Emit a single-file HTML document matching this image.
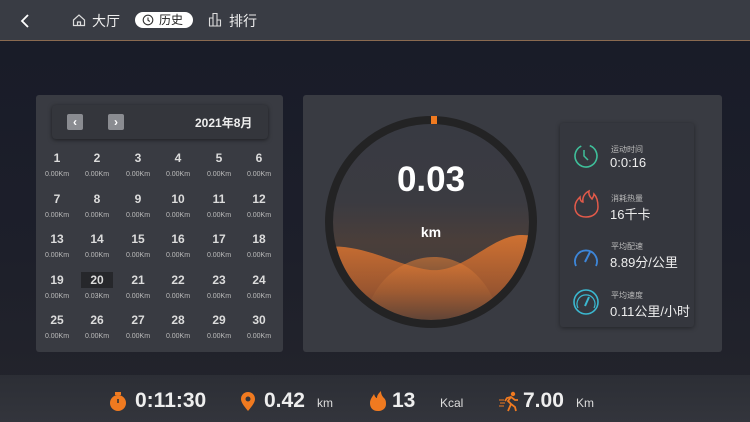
<!DOCTYPE html>
<html><head><meta charset="utf-8"><style>
*{margin:0;padding:0;box-sizing:border-box}
body{width:750px;height:422px;overflow:hidden;background:linear-gradient(180deg,#181b28 0%,#1d1f2a 60%,#24252c 100%);font-family:"Liberation Sans","Noto Sans CJK SC",sans-serif;color:#e6e6e6;position:relative}
.top{position:absolute;left:0;top:0;width:750px;height:41px;background:#393c44;border-bottom:1px solid #8a6a50}
.abs{position:absolute}
.panel{position:absolute;background:#393b42;border-radius:3px}
.hdr{position:absolute;left:52px;top:105px;width:216px;height:34px;background:#34363c;border-radius:4px;box-shadow:0 1px 4px rgba(0,0,0,.5)}
.btn{position:absolute;top:9px;width:16px;height:16px;background:#8a8c91;border-radius:2px;color:#fff;font-size:12px;line-height:16px;text-align:center;font-weight:bold}
.cell{position:absolute;width:40px;text-align:center}
.cell b{display:block;font-size:12px;color:#dcdcdc;height:16px;line-height:16px}
.cell i{display:block;font-style:normal;font-size:7px;color:#bbb;margin-top:5px}
.bot{position:absolute;left:0;top:375px;width:750px;height:47px;background:linear-gradient(#2c2e35,#33353c)}
.big{position:absolute;top:389px;font-size:21px;font-weight:bold;color:#eee}
.unit{position:absolute;top:396px;font-size:12px;color:#ddd}
.lab{position:absolute;left:611px;font-size:8px;color:#bbb}
.val{position:absolute;left:610px;font-size:13px;color:#eee}
</style></head><body>
<div class="top"></div>
<svg class="abs" style="left:18px;top:13px" width="14" height="16"><path d="M10 2 L4 8 L10 14" stroke="#fff" stroke-width="1.8" fill="none"/></svg>
<svg class="abs" style="left:72px;top:13px" width="14" height="14"><path d="M1.5 7 L7 2 L12.5 7 V12.5 H1.5 Z M5.5 12.5 V9 H8.5 V12.5" stroke="#ddd" stroke-width="1.2" fill="none"/></svg>
<div class="abs" style="left:92px;top:11px;font-size:14px;color:#eee">大厅</div>
<div class="abs" style="left:135px;top:12px;width:58px;height:16px;background:#fff;border-radius:8px"></div>
<svg class="abs" style="left:142px;top:14px" width="12" height="12"><circle cx="6" cy="6" r="4.8" stroke="#333" stroke-width="1.1" fill="none"/><path d="M6 3.5V6.2L7.8 7.5" stroke="#333" stroke-width="1.1" fill="none"/></svg>
<div class="abs" style="left:159px;top:12px;font-size:12px;color:#222;line-height:16px">历史</div>
<svg class="abs" style="left:208px;top:12px" width="14" height="15"><path d="M1.5 14V6H5V14 M5 14V1.5H9V14 M9 14V8H12.5V14 H1" stroke="#ddd" stroke-width="1.1" fill="none"/></svg>
<div class="abs" style="left:229px;top:11px;font-size:14px;color:#eee">排行</div>

<div class="panel" style="left:36px;top:95px;width:247px;height:257px"></div>
<div class="hdr"><div class="btn" style="left:15px">‹</div><div class="btn" style="left:56px">›</div>
<div class="abs" style="left:143px;top:9px;font-size:12px;font-weight:bold;color:#eee">2021年8月</div></div>
<div id="cal"></div>

<div class="panel" style="left:303px;top:95px;width:419px;height:257px"></div>
<svg class="abs" style="left:324px;top:115px" width="214" height="214">
<defs><clipPath id="c"><circle cx="107" cy="107" r="98"/></clipPath>
<linearGradient id="g1" x1="0" y1="0" x2="0" y2="1"><stop offset="0" stop-color="#e67a30"/><stop offset=".6" stop-color="#a85a2e"/><stop offset="1" stop-color="#4a3c38"/></linearGradient>
<linearGradient id="g2" x1="0" y1="0" x2="0" y2="1"><stop offset="0" stop-color="#f08436"/><stop offset="1" stop-color="#5a4035" stop-opacity=".6"/></linearGradient>
<linearGradient id="bg" x1="0" y1="0" x2="0" y2="1"><stop offset="0" stop-color="#383a42"/><stop offset=".4" stop-color="#3b3b41"/><stop offset=".6" stop-color="#4a3e3a"/><stop offset="1" stop-color="#3a3a3e"/></linearGradient></defs>
<circle cx="107" cy="107" r="98" fill="url(#bg)"/>
<g clip-path="url(#c)">
<path d="M0 132 C40 128 70 150 106 155 C140 158 165 122 196 120 C205 120 210 121 214 122 V214 H0Z" fill="url(#g1)" opacity=".85"/>
<path d="M39 214 C45 165 80 142 110 142 C140 142 170 165 178 214Z" fill="url(#g2)" opacity=".55"/>
</g>
<circle cx="107" cy="107" r="102" stroke="#232324" stroke-width="8" fill="none"/>
<rect x="107" y="1" width="6" height="8" fill="#f07a20"/>
</svg>
<div class="abs" style="left:331px;top:160px;width:200px;text-align:center;font-size:35px;font-weight:bold;color:#fff">0.03</div>
<div class="abs" style="left:331px;top:224px;width:200px;text-align:center;font-size:14px;font-weight:bold;color:#fff">km</div>

<div class="panel" style="left:560px;top:123px;width:134px;height:204px;background:#35373e;box-shadow:0 1px 5px rgba(0,0,0,.4)"></div>
<svg class="abs" style="left:572px;top:142px" width="30" height="180">
<circle cx="14" cy="14" r="11" stroke="#3fbf9a" stroke-width="1.6" fill="none" stroke-dasharray="60 9" transform="rotate(-70 14 14)"/><path d="M12 8V14L16 18" stroke="#3fbf9a" stroke-width="1.5" fill="none"/>
<path d="M14 75 C6 75 3 70 3 65 C3 60 6 57 8 55 C8 59 10 60 11 60 C10 55 13 51 17 49 C16 53 19 56 20 57 C21 55 22 54 22 52 C25 55 26 60 26 65 C26 71 21 75 14 75Z" stroke="#e35a4a" stroke-width="1.5" fill="none"/>
<path d="M4 124 A11 11 0 1 1 24 124" stroke="#3d86d9" stroke-width="1.8" fill="none"/><path d="M13 120 L18 110" stroke="#3d86d9" stroke-width="2"/>
<circle cx="14" cy="160" r="12" stroke="#3bb8d0" stroke-width="1.6" fill="none"/><path d="M6 166 A9 9 0 1 1 22 166" stroke="#3bb8d0" stroke-width="1.2" fill="none"/><path d="M13 164 L17 155" stroke="#3bb8d0" stroke-width="2"/>
</svg>
<div class="lab" style="top:144px">运动时间</div><div class="val" style="top:155px">0:0:16</div>
<div class="lab" style="top:193px">消耗热量</div><div class="val" style="top:204px">16千卡</div>
<div class="lab" style="top:241px">平均配速</div><div class="val" style="top:252px">8.89分/公里</div>
<div class="lab" style="top:290px">平均速度</div><div class="val" style="top:301px">0.11公里/小时</div>

<div class="bot"></div>
<svg class="abs" style="left:109px;top:392px" width="18" height="20"><circle cx="9" cy="11" r="8" fill="#f07a20"/><rect x="6" y="0" width="6" height="3" fill="#f07a20"/><path d="M9 7V11" stroke="#333" stroke-width="1.6"/></svg>
<div class="big" style="left:135px">0:11:30</div>
<svg class="abs" style="left:240px;top:392px" width="16" height="20"><path d="M8 19 C3 13 1 10 1 7 A7 7 0 0 1 15 7 C15 10 13 13 8 19Z" fill="#f07a20"/><circle cx="8" cy="7" r="2.5" fill="#33353c"/></svg>
<div class="big" style="left:264px">0.42</div><div class="unit" style="left:317px">km</div>
<svg class="abs" style="left:369px;top:391px" width="18" height="21"><path d="M9 20 C3 20 1 16 1 12 C1 8 4 5 5 3 C6 6 7 7 8 7 C8 4 10 2 12 0 C12 4 14 6 15 7 C17 9 17 11 17 13 C17 17 14 20 9 20Z" fill="#f07a20"/></svg>
<div class="big" style="left:392px">13</div><div class="unit" style="left:440px">Kcal</div>
<svg class="abs" style="left:499px;top:391px" width="20" height="21"><circle cx="14" cy="3" r="2.2" fill="#f07a20"/><path d="M9 20 L12 13 L9 10 L12 6 L16 9 L19 9 M12 13 L16 16 L17 20 M12 6 L8 7 L6 10" stroke="#f07a20" stroke-width="1.8" fill="none"/><path d="M0 9H5 M1 12H6 M0 15H5" stroke="#f07a20" stroke-width="1"/></svg>
<div class="big" style="left:523px">7.00</div><div class="unit" style="left:576px">Km</div>
<script>
var h='',xs=[57,97,138,178,219,259];
for(var d=1;d<=30;d++){var c=(d-1)%6,r=Math.floor((d-1)/6);var y=150+r*40.5;
h+='<div class="cell" style="left:'+(xs[c]-20)+'px;top:'+y+'px"><b style="'+(d==20?'width:32px;margin:0 auto;background:#26272b;':'')+'">'+d+'</b><i>'+(d==20?'0.03Km':'0.00Km')+'</i></div>';}
document.getElementById('cal').innerHTML=h;
</script>
</body></html>
